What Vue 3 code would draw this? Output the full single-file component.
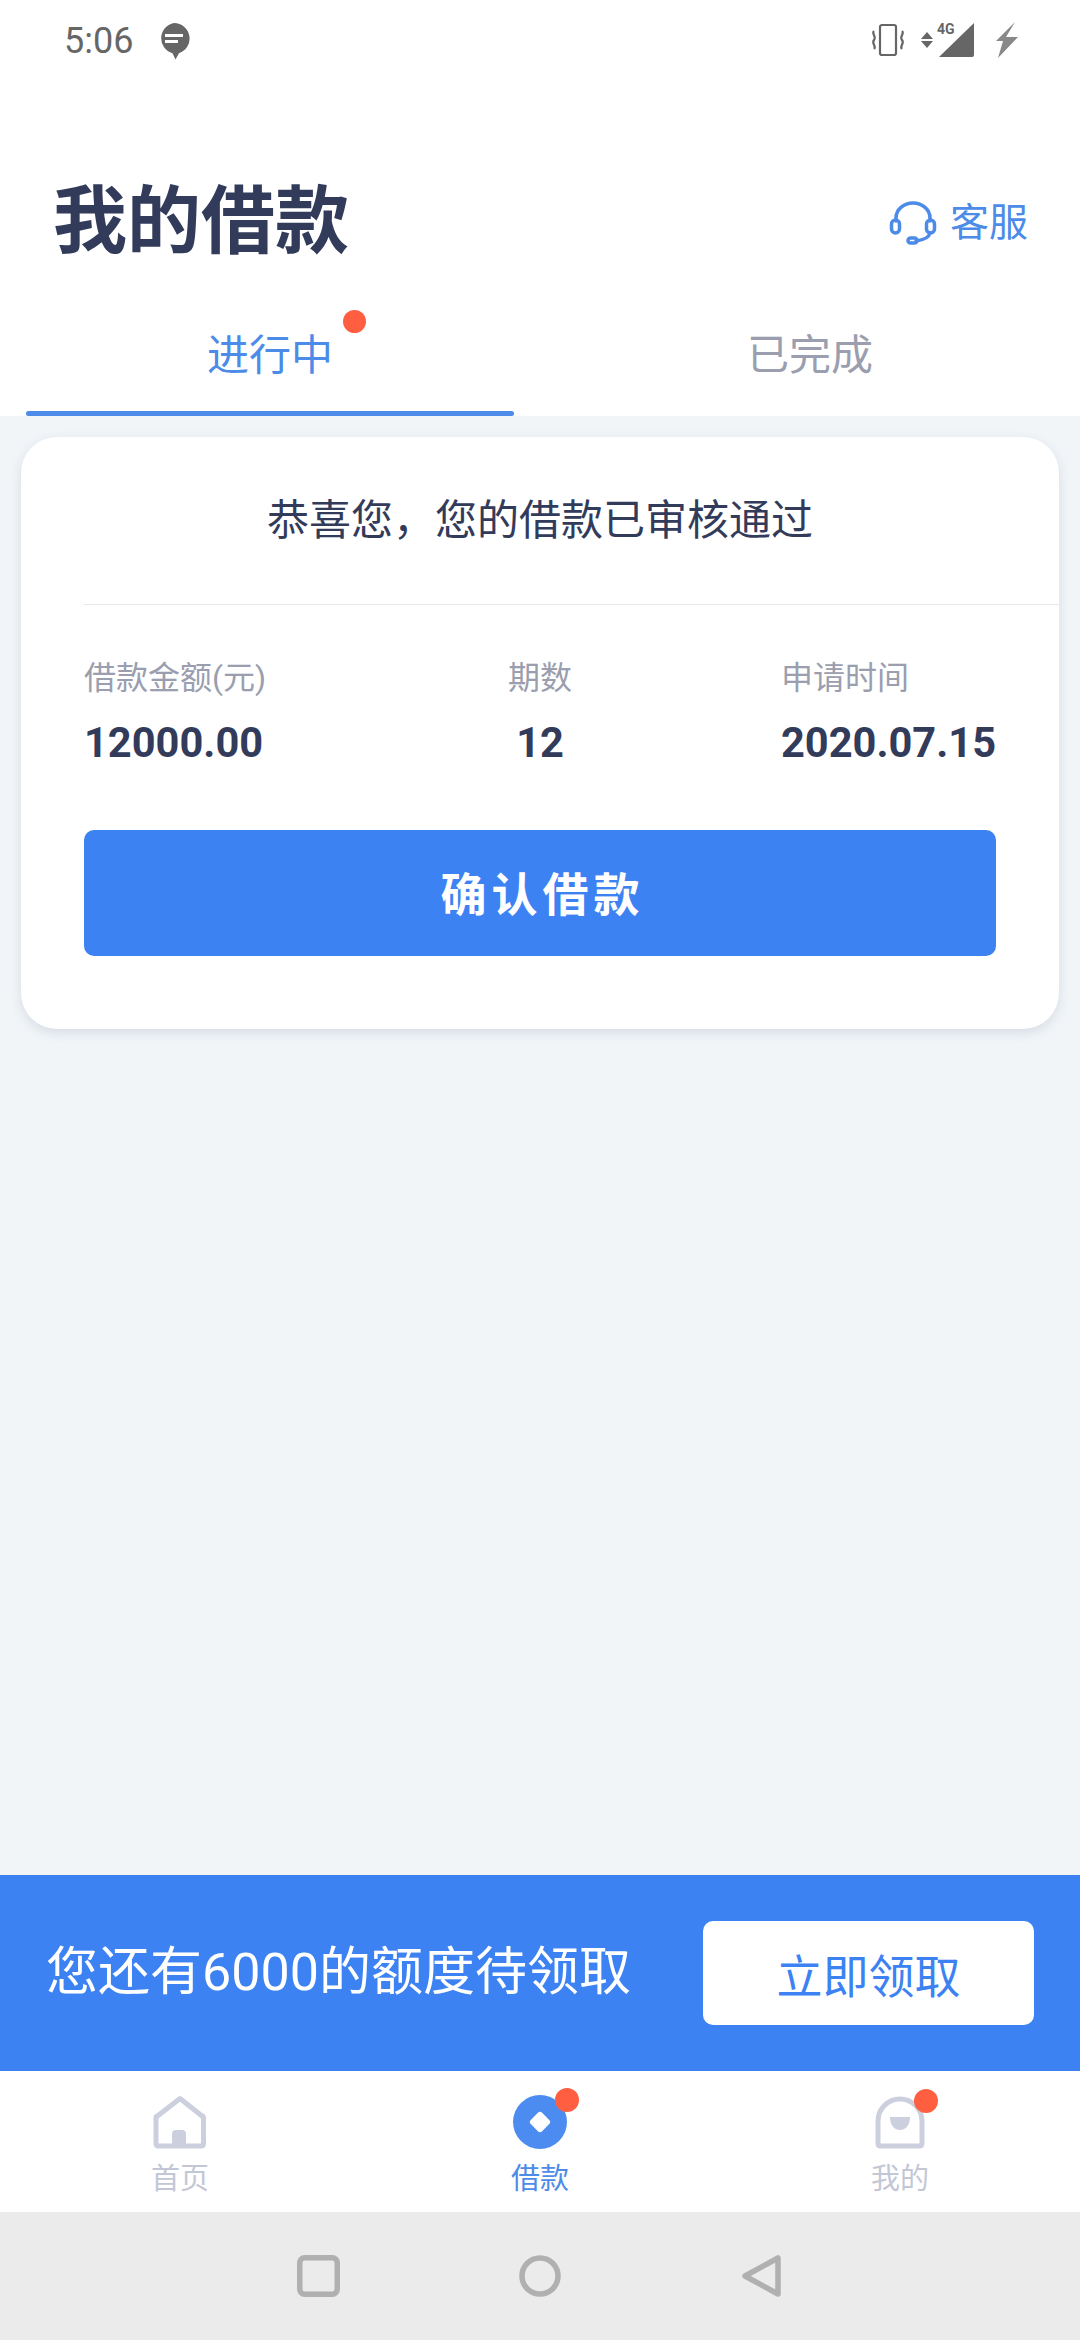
<script setup>
const stats = [
  { label: '借款金额(元)', value: '12000.00', cls: 'left' },
  { label: '期数', value: '12', cls: 'mid' },
  { label: '申请时间', value: '2020.07.15', cls: 'right' },
]
</script>

<template>
  <div class="page">
    <div class="status">
      <div class="status-left">
        <span class="time">5:06</span>
        <svg class="bubble" width="32" height="38" viewBox="0 0 32 38">
          <path d="M16 1a15.500 15.500 0 0 1 5 30.200l-3.500 6.300-3-6.300A15.500 15.500 0 0 1 16 1z" fill="#666" />
          <rect x="7" y="12" width="18" height="3" fill="#fff" />
          <rect x="7" y="18" width="13" height="3" fill="#fff" />
        </svg>
      </div>
      <div class="status-right">
        <svg width="36" height="34" viewBox="0 0 36 34" fill="none" stroke="#666" stroke-width="2.200">
          <rect x="10" y="2" width="16" height="30" rx="2" />
          <path d="M4 8c-3 3 3 5 0 9s3 6 0 9M32 8c3 3-3 5 0 9s-3 6 0 9" />
        </svg>
        <svg class="sig" width="54" height="36" viewBox="0 0 54 36">
          <path d="M0 17l6-7 6 7zM0 19h12l-6 7z" fill="#666" />
          <text x="16" y="12" class="four-g">4G</text>
          <path d="M18 35L53 1v32a2 2 0 0 1-2 2z" fill="#666" />
        </svg>
        <svg class="bolt" width="24" height="38" viewBox="0 0 24 38">
          <path d="M20 1L11 16h12L3 37l5-17H1z" fill="#888" />
        </svg>
      </div>
    </div>

    <header class="head">
      <h1 class="title">我的借款</h1>
      <div class="service">
        <svg width="48" height="44" viewBox="0 0 48 44" fill="none" stroke="#4c8be8" stroke-width="3.500" stroke-linecap="round">
          <path d="M7 20v-3a17 15 0 0 1 34 0v3" />
          <rect x="2.500" y="19" width="8" height="13" rx="4" />
          <rect x="37.500" y="19" width="8" height="13" rx="4" />
          <path d="M41 32c-1 5-7 7-14 8" />
          <rect x="19" y="37" width="9" height="5" rx="2.500" />
        </svg>
        <span>客服</span>
      </div>
    </header>

    <nav class="tabs">
      <div class="tab active">
        <span class="tab-text">进行中<i class="tab-dot"></i></span>
      </div>
      <div class="tab"><span class="tab-text">已完成</span></div>
    </nav>

    <main class="content">
      <section class="card">
        <div class="card-title">恭喜您，您的借款已审核通过</div>
        <div class="divider"></div>
        <div class="stats">
          <div v-for="s in stats" :key="s.label" class="stat" :class="s.cls">
            <div class="stat-label">{{ s.label }}</div>
            <div class="stat-value">{{ s.value }}</div>
          </div>
        </div>
        <button class="confirm">确认借款</button>
      </section>
    </main>

    <div class="promo">
      <span class="promo-text">您还有6000的额度待领取</span>
      <button class="claim">立即领取</button>
    </div>

    <div class="tabbar">
      <div class="item">
        <span class="icon-wrap">
          <svg width="56" height="54" viewBox="0 0 56 54">
            <path d="M28 3.500L50 21a2 2 0 0 1 1.500 2v26a2 2 0 0 1-2 2H6a2 2 0 0 1-2-2V23a2 2 0 0 1 1.500-2z" fill="none" stroke="#ccd0de" stroke-width="5" stroke-linejoin="round" />
            <path d="M20 51V39a4 4 0 0 1 4-4h6a4 4 0 0 1 4 4v12z" fill="#ccd0de" />
          </svg>
        </span>
        <span class="item-label">首页</span>
      </div>
      <div class="item on">
        <span class="icon-wrap">
          <svg width="56" height="54" viewBox="0 0 56 54">
            <circle cx="28" cy="27" r="27" fill="#4c8bf0" />
            <rect x="20" y="19" width="16" height="16" rx="3" transform="rotate(45 28 27)" fill="#fff" />
          </svg>
          <i class="dot"></i>
        </span>
        <span class="item-label">借款</span>
      </div>
      <div class="item mine">
        <span class="icon-wrap">
          <svg width="56" height="54" viewBox="0 0 56 54">
            <path d="M6 49V26a22 22 0 0 1 44 0v23a2 2 0 0 1-2 2H8a2 2 0 0 1-2-2z" fill="none" stroke="#ccd0de" stroke-width="5" />
            <path d="M18 22h20c0 8-4 13-10 13s-10-5-10-13z" fill="#ccd0de" />
          </svg>
          <i class="dot"></i>
        </span>
        <span class="item-label">我的</span>
      </div>
    </div>

    <div class="sysnav">
      <span class="sys-cell">
        <svg width="43" height="42" viewBox="0 0 43 42" fill="none" stroke="#b0b0b0" stroke-width="5.500">
          <rect x="2.750" y="2.750" width="37.500" height="36.500" rx="5" />
        </svg>
      </span>
      <span class="sys-cell">
        <svg width="42" height="42" viewBox="0 0 42 42" fill="none" stroke="#b0b0b0" stroke-width="5.500">
          <circle cx="21" cy="21" r="18" />
        </svg>
      </span>
      <span class="sys-cell">
        <svg width="40" height="42" viewBox="0 0 40 42" fill="none" stroke="#b0b0b0" stroke-width="5.500" stroke-linejoin="round">
          <path d="M36 3v36L3 21z" />
        </svg>
      </span>
    </div>
  </div>
</template>

<style scoped>
.page {
  width: 1080px;
  height: 2340px;
  display: flex;
  flex-direction: column;
  background: #fff;
  font-family: Roboto, "Noto Sans CJK SC", sans-serif;
  overflow: hidden;
}
.status {
  height: 80px;
  flex: none;
  display: flex;
  justify-content: space-between;
  align-items: center;
  padding: 0 61px 0 64px;
  color: #666;
}
.status-left,
.status-right {
  display: flex;
  align-items: center;
}
.time {
  font-size: 36px;
  line-height: 1;
  margin-top: 2px;
}
.bubble {
  margin-left: 25px;
  margin-top: 2px;
}
.sig {
  margin-left: 15px;
}
.bolt {
  margin-left: 20px;
}
.four-g {
  font: 700 14px Roboto, sans-serif;
  fill: #666;
}
.head {
  flex: none;
  height: 200px;
  padding: 84px 52px 0 53px;
  box-sizing: border-box;
  display: flex;
  justify-content: space-between;
  align-items: center;
}
.title {
  margin: 0;
  font-size: 74px;
  line-height: 1;
  font-weight: 700;
  color: #333b5b;
}
.service {
  display: flex;
  align-items: center;
  gap: 13px;
  margin-top: 2px;
  font-size: 39px;
  line-height: 1;
  color: #4c8be8;
}
.tabs {
  flex: none;
  height: 136px;
  display: flex;
}
.tab {
  width: 540px;
  position: relative;
  text-align: center;
  padding-top: 51px;
  box-sizing: border-box;
  font-size: 42px;
  color: #9a9eae;
}
.tab.active {
  color: #4c8be8;
}
.tab.active::after {
  content: "";
  position: absolute;
  left: 26px;
  right: 26px;
  bottom: 0;
  height: 5px;
  border-radius: 3px;
  background: #4c8be8;
}
.tab-text {
  position: relative;
  display: inline-block;
  line-height: 42px;
}
.tab-dot {
  position: absolute;
  left: 100%;
  margin-left: 10px;
  top: -25px;
  width: 23px;
  height: 23px;
  border-radius: 50%;
  background: #ff5f40;
}
.content {
  flex: 1;
  background: #f1f5f8;
  padding: 21px;
  box-sizing: border-box;
}
.card {
  height: 592px;
  background: #fff;
  border-radius: 36px;
  box-shadow: 0 4px 12px rgba(60, 80, 110, 0.14);
}
.card-title {
  height: 167px;
  display: flex;
  align-items: center;
  justify-content: center;
  font-size: 42px;
  line-height: 1;
  color: #333b5b;
}
.divider {
  height: 1px;
  margin-left: 63px;
  background: #e6e8ee;
}
.stats {
  margin: 0 63px;
  padding-top: 53px;
  display: grid;
  grid-template-columns: 1fr auto 1fr;
}
.stat.mid {
  text-align: center;
}
.stat.right {
  justify-self: end;
}
.stat-label {
  font-size: 32px;
  line-height: 40px;
  color: #9a9eae;
}
.stat-value {
  margin-top: 24px;
  font-size: 41.6px;
  line-height: 42px;
  font-weight: 700;
  color: #333b5b;
}
.confirm {
  display: block;
  width: 912px;
  height: 126px;
  margin: 66px 0 0 63px;
  padding: 0 0 5px 5px;
  border: 0;
  border-radius: 10px;
  background: #3d82f3;
  color: #fff;
  font-family: inherit;
  font-size: 46px;
  font-weight: 700;
  letter-spacing: 5px;
}
.promo {
  flex: none;
  height: 196px;
  background: #3d82f3;
  display: flex;
  align-items: center;
  justify-content: space-between;
  padding: 0 46px 0 46px;
  box-sizing: border-box;
}
.promo-text {
  font-size: 52px;
  line-height: 1;
  color: #fff;
}
.claim {
  width: 331px;
  height: 104px;
  padding: 0;
  border: 0;
  border-radius: 10px;
  background: #fff;
  color: #3d82f3;
  font-family: inherit;
  font-size: 46px;
}
.tabbar {
  flex: none;
  height: 141px;
  display: flex;
  background: #fff;
}
.item {
  flex: 1;
  display: flex;
  flex-direction: column;
  align-items: center;
  padding-top: 24px;
  box-sizing: border-box;
}
.icon-wrap {
  position: relative;
  display: block;
  width: 56px;
  height: 54px;
}
.icon-wrap svg {
  display: block;
}
.dot {
  position: absolute;
  left: 43px;
  top: -7px;
  width: 24px;
  height: 24px;
  border-radius: 50%;
  background: #ff5f40;
}
.mine .dot {
  left: 42px;
  top: -6px;
}
.item-label {
  margin-top: 16px;
  font-size: 29px;
  line-height: 28px;
  color: #c3c7d5;
}
.item.on .item-label {
  color: #4c8be8;
}
.sysnav {
  flex: none;
  height: 128px;
  background: #ebebeb;
  display: flex;
  justify-content: center;
  align-items: center;
}
.sys-cell {
  width: 222px;
  display: flex;
  justify-content: center;
}
.sys-cell svg {
  display: block;
}
</style>
